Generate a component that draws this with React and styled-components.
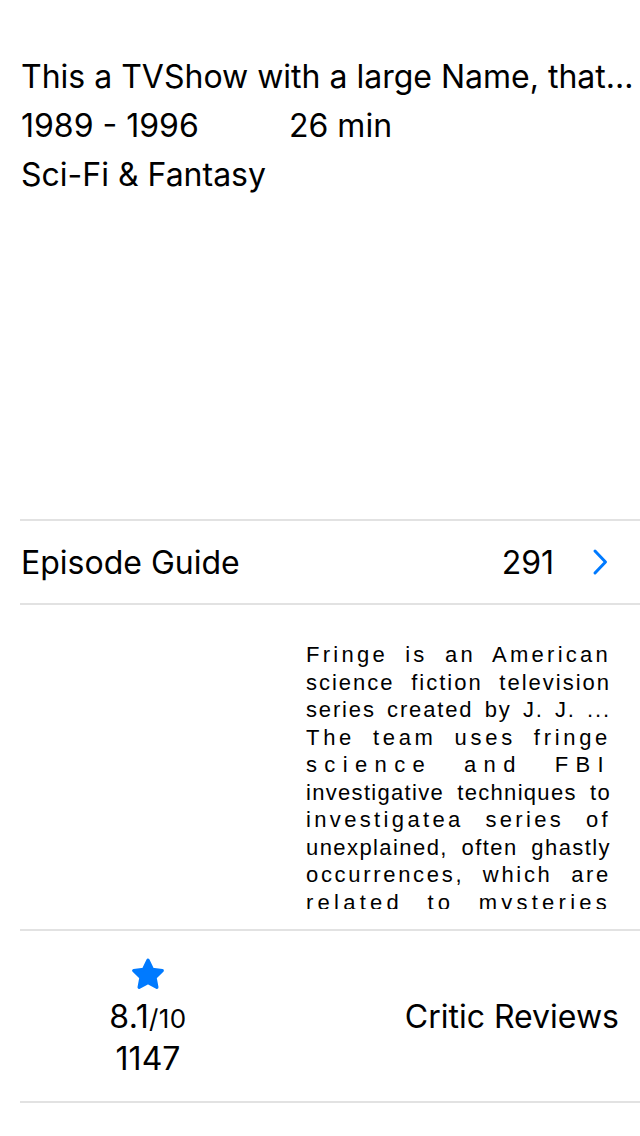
import { useLayoutEffect, useState } from 'react'
import styled, { createGlobalStyle } from 'styled-components'

const GlobalStyle = createGlobalStyle`
  * { box-sizing: border-box; }
  body {
    margin: 0;
    background: #fff;
    color: #000;
    font-family: Inter, Roboto, "Liberation Sans", sans-serif;
  }
`

const Page = styled.div`
  width: 640px;
  min-height: 1136px;
  background: #fff;
`

const Hero = styled.header`
  height: 519px;
  padding: 52px 8px 0 21px;
`

const HeroLine = styled.div`
  font-size: 32px;
  line-height: 49px;
  white-space: nowrap;
`

const Meta = styled.span`
  display: inline-block;
  width: ${p => p.$width || 'auto'};
`

const Row = styled.section`
  margin-left: 20px;
  border-top: 2px solid #e2e2e2;
  border-bottom: ${p => (p.$last ? '2px solid #e2e2e2' : 'none')};
`

const EpisodeRow = styled.div`
  height: 82px;
  display: flex;
  align-items: center;
  padding: 0 32px 0 1px;
  font-size: 32px;
`

const Label = styled.span`
  flex: 1;
`

const Count = styled.span`
  margin-right: 38px;
`

const Overview = styled.div`
  height: 324px;
  display: flex;
  padding-top: 36px;
`

const PosterSpace = styled.div`
  width: 286px;
  flex-shrink: 0;
`

const OverviewText = styled.div`
  width: 305px;
  height: 268px;
  overflow: hidden;
  font-family: "Liberation Sans", Arial, sans-serif;
  font-size: 22px;
  line-height: 27.5px;
`

const LineBox = styled.div`
  text-align: justify;
  text-align-last: justify;
  white-space: nowrap;
`

const RatingRow = styled.div`
  height: 170px;
  display: flex;
  padding-top: 26px;
`

const Rating = styled.div`
  width: 256px;
  display: flex;
  flex-direction: column;
  align-items: center;
`

const Score = styled.div`
  font-size: 32px;
  line-height: 40px;
  margin-top: 4px;
  letter-spacing: 0.4px;
`

const OutOf = styled.span`
  font-size: 26px;
`

const Votes = styled.div`
  font-size: 32px;
  line-height: 40px;
`

const Critic = styled.div`
  flex: 1;
  text-align: right;
  padding-right: 21px;
  padding-top: 40px;
  font-size: 32px;
  line-height: 40px;
`

const overview = [
  'Fringe is an American',
  'science fiction television',
  'series created by J. J. ...',
  'The team uses fringe',
  'science and FBI',
  'investigative techniques to',
  'investigatea series of',
  'unexplained, often ghastly',
  'occurrences, which are',
  'related to mysteries',
]

const LINE_WIDTH = 305
const OVERVIEW_FONT = '22px "Liberation Sans", Arial, sans-serif'

// spread the slack of a line mostly into letter spacing, as iOS does
function OverviewLine({ children }) {
  const [spread, setSpread] = useState(0)

  useLayoutEffect(() => {
    const ctx = document.createElement('canvas').getContext('2d')
    ctx.font = OVERVIEW_FONT
    const width = ctx.measureText(children).width
    const slack = LINE_WIDTH - width
    const n = children.length
    if (slack > 0) setSpread((slack * 0.75) / n)
  }, [children])

  return <LineBox style={{ letterSpacing: spread + 'px' }}>{children}</LineBox>
}

const Star = () => (
  <svg width="36" height="36" viewBox="0 0 24 24">
    <path
      d="M12 2.2l2.9 6 6.6.9-4.8 4.6 1.2 6.5L12 17.1l-5.9 3.1 1.2-6.5-4.8-4.6 6.6-.9z"
      fill="#007aff"
      stroke="#007aff"
      strokeWidth="2.2"
      strokeLinejoin="round"
    />
  </svg>
)

const Chevron = () => (
  <svg width="16" height="28" viewBox="0 0 16 28">
    <polyline
      points="3,3 13.5,14 3,25"
      fill="none"
      stroke="#007aff"
      strokeWidth="3"
      strokeLinecap="round"
      strokeLinejoin="round"
    />
  </svg>
)

export default function App() {
  return (
    <Page>
      <GlobalStyle />
      <Hero>
        <HeroLine>This a TVShow with a large Name, that...</HeroLine>
        <HeroLine>
          <Meta $width="268px">1989 - 1996</Meta>
          <Meta>26 min</Meta>
        </HeroLine>
        <HeroLine>Sci-Fi &amp; Fantasy</HeroLine>
      </Hero>

      <Row>
        <EpisodeRow>
          <Label>Episode Guide</Label>
          <Count>291</Count>
          <Chevron />
        </EpisodeRow>
      </Row>

      <Row>
        <Overview>
          <PosterSpace />
          <OverviewText>
            {overview.map(line => (
              <OverviewLine key={line}>{line}</OverviewLine>
            ))}
          </OverviewText>
        </Overview>
      </Row>

      <Row $last>
        <RatingRow>
          <Rating>
            <Star />
            <Score>
              8.1<OutOf>/10</OutOf>
            </Score>
            <Votes>1147</Votes>
          </Rating>
          <Critic>Critic Reviews</Critic>
        </RatingRow>
      </Row>
    </Page>
  )
}
